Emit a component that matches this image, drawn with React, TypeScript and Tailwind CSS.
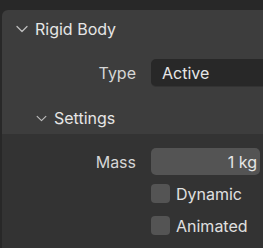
import React from "react";

const Chevron = ({ className }: { className?: string }) => (
  <svg
    viewBox="0 0 12 8"
    className={className}
    fill="none"
    stroke="#bdbdbd"
    strokeWidth={1.3}
    strokeLinecap="round"
    strokeLinejoin="round"
  >
    <path d="M1 1.5 L6 6.5 L11 1.5" />
  </svg>
);

const Checkbox = ({ label }: { label: string }) => (
  <div className="flex h-[19px] items-center gap-[6px]">
    <div className="h-[19px] w-[19px] rounded-[4px] bg-[#545454]" />
    <span className="text-[16px] leading-none text-[#e0e0e0]">{label}</span>
  </div>
);

const App = () => {
  return (
    <div
      className="h-[248px] w-[263px] overflow-hidden bg-[#282828] pl-[2px] pt-[10px]"
      style={{ fontFamily: "Inter, 'Noto Sans', sans-serif" }}
    >
      <div className="flex h-full w-[280px] flex-col overflow-hidden rounded-tl-[6px] bg-[#3d3d3d]">
        {/* RIGID BODY HEADER */}
        <div className="flex h-[38px] shrink-0 items-center pl-[14px]">
          <Chevron className="h-[8px] w-[12px]" />
          <span className="ml-[7px] text-[16px] text-[#e6e6e6]">Rigid Body</span>
        </div>

        {/* TYPE ROW */}
        <div className="mt-[11px] flex h-[27px] shrink-0 items-center">
          <span className="w-[134px] text-right text-[16px] text-[#d6d6d6]">Type</span>
          <div className="ml-[15px] flex h-full flex-1 items-center rounded-l-[5px] bg-[#282828] pl-[11px] shadow-[0_1px_0_#333333]">
            <span className="text-[16px] text-[#e6e6e6]">Active</span>
          </div>
        </div>

        {/* SETTINGS SUBPANEL */}
        <div className="flex flex-1 flex-col">
          <div className="flex h-[48px] shrink-0 items-center pl-[34px] pt-[16px]">
            <Chevron className="h-[7px] w-[11px]" />
            <span className="ml-[7px] text-[16px] text-[#e6e6e6]">Settings</span>
          </div>

          <div className="flex flex-1 flex-col bg-[#333333]">
            <div className="mt-[14px] flex h-[27px] shrink-0 items-center">
              <span className="w-[134px] text-right text-[16px] text-[#d6d6d6]">Mass</span>
              <div className="ml-[15px] flex h-full w-[109px] items-center justify-end rounded-[5px] bg-[#545454] pr-[3px]">
                <span className="text-[16px] text-[#e6e6e6]">1 kg</span>
              </div>
            </div>

            <div className="mt-[9px] flex flex-col gap-[13px] pl-[149px]">
              <Checkbox label="Dynamic" />
              <Checkbox label="Animated" />
            </div>
          </div>
        </div>
      </div>
    </div>
  );
};

export default App;
